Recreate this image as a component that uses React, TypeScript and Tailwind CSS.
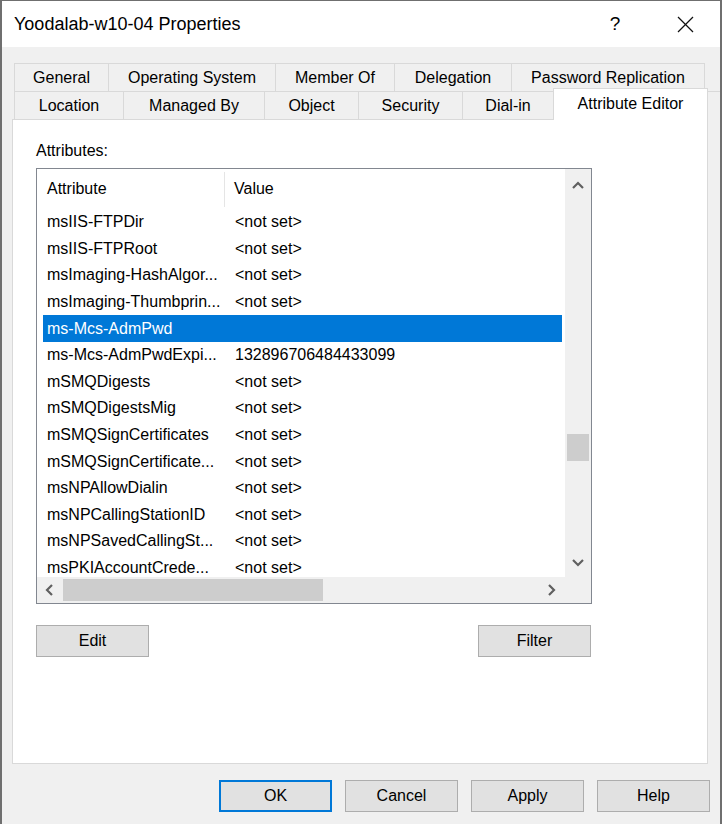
import React from 'react';

const rows: [string, string][] = [
    ['msIIS-FTPDir', '<not set>'],
    ['msIIS-FTPRoot', '<not set>'],
    ['msImaging-HashAlgor...', '<not set>'],
    ['msImaging-Thumbprin...', '<not set>'],
    ['ms-Mcs-AdmPwd', ''],
    ['ms-Mcs-AdmPwdExpi...', '132896706484433099'],
    ['mSMQDigests', '<not set>'],
    ['mSMQDigestsMig', '<not set>'],
    ['mSMQSignCertificates', '<not set>'],
    ['mSMQSignCertificate...', '<not set>'],
    ['msNPAllowDialin', '<not set>'],
    ['msNPCallingStationID', '<not set>'],
    ['msNPSavedCallingSt...', '<not set>'],
    ['msPKIAccountCrede...', '<not set>'],
];

const SELECTED = 4;

const backTabs = [
    { label: 'General', w: 'w-[94px]' },
    { label: 'Operating System', w: 'w-[167px]' },
    { label: 'Member Of', w: 'w-[119px]' },
    { label: 'Delegation', w: 'w-[117px]' },
    { label: 'Password Replication', w: 'w-[194px] border-r' },
];

const frontTabs = [
    { label: 'Location', w: 'w-[109px]' },
    { label: 'Managed By', w: 'w-[141px]' },
    { label: 'Object', w: 'w-[94px]' },
    { label: 'Security', w: 'w-[104px]' },
    { label: 'Dial-in', w: 'w-[91px]' },
];

// Small scrollbar chevron
const Chevron = ({ dir }: { dir: 'up' | 'down' | 'left' | 'right' }) => {
    const pts = {
        up: '1,7 6,2 11,7',
        down: '1,2 6,7 11,2',
        left: '7,1 2,6 7,11',
        right: '2,1 7,6 2,11',
    }[dir];
    const vertical = dir === 'up' || dir === 'down';
    return (
        <svg
            width={vertical ? 12 : 9}
            height={vertical ? 9 : 12}
            viewBox={vertical ? '0 0 12 9' : '0 0 9 12'}
        >
            <polyline points={pts} fill="none" stroke="#606060" strokeWidth="2.2" />
        </svg>
    );
};

const Button = ({ children, primary }: { children: React.ReactNode; primary?: boolean }) => (
    <div
        className={
            primary
                ? 'flex h-[32px] w-[113px] items-center justify-center border-2 border-[#0078d7] bg-[#e1e1e1] text-[16px] text-black'
                : 'flex h-[32px] w-[113px] items-center justify-center border border-[#adadad] bg-[#e1e1e1] text-[16px] text-black'
        }
    >
        {children}
    </div>
);

export default function App() {
    return (
        <div className="h-[824px] w-[723px] overflow-hidden bg-white font-['Liberation_Sans',Arial,sans-serif]">
            <div className="flex h-[824px] w-[722px] flex-col border-x-2 border-t border-[#6f6f6f] bg-[#f0f0f0]">
                {/* Title bar */}
                <div className="flex h-[46px] shrink-0 items-center bg-white pl-[12px] pr-[12px]">
                    <span className="text-[18px] text-black">Yoodalab-w10-04 Properties</span>
                    <div className="ml-auto flex w-[46px] items-center justify-center text-[19px] text-black">?</div>
                    <div className="ml-[24px] flex w-[46px] items-center justify-center">
                        <svg width="17" height="17" viewBox="0 0 17 17">
                            <line x1="1" y1="1" x2="16" y2="16" stroke="#111" strokeWidth="1.3" />
                            <line x1="16" y1="1" x2="1" y2="16" stroke="#111" strokeWidth="1.3" />
                        </svg>
                    </div>
                </div>

                {/* Tabs */}
                <div className="mt-[16px] flex flex-col pl-[12px]">
                    <div className="flex h-[28px]">
                        {backTabs.map((t) => (
                            <div
                                key={t.label}
                                className={`${t.w} flex items-center justify-center border-l border-t border-[#d9d9d9] text-[16px] text-black`}
                            >
                                {t.label}
                            </div>
                        ))}
                    </div>
                    <div className="flex h-[28px] items-end border-t border-[#d9d9d9]">
                        {frontTabs.map((t) => (
                            <div
                                key={t.label}
                                className={`${t.w} flex h-[27px] items-center justify-center border-l border-[#d9d9d9] bg-[#f0f0f0] text-[16px] text-black`}
                            >
                                {t.label}
                            </div>
                        ))}
                        <div className="relative z-10 -mb-px flex h-[32px] w-[155px] items-start justify-center border border-b-0 border-[#d9d9d9] bg-white pt-[3px] text-[16px] text-black">
                            Attribute Editor
                        </div>
                    </div>
                </div>

                {/* Tab panel */}
                <div className="ml-[10px] flex h-[645px] w-[696px] flex-col border border-[#d9d9d9] bg-white pl-[23px] pt-[21px]">
                    <div className="h-[20px] text-[16px] leading-[20px] text-black">Attributes:</div>

                    <div className="mt-[7px] grid h-[436px] w-[556px] grid-cols-[1fr_26px] grid-rows-[1fr_26px] border border-[#828790]">
                        {/* List content */}
                        <div className="overflow-hidden bg-white">
                            <div className="flex h-[40px] items-center text-[16px] text-black">
                                <div className="w-[187px] pl-[10px]">Attribute</div>
                                <div className="h-[35px] w-px bg-[#e5e5e5]" />
                                <div className="pl-[9px]">Value</div>
                            </div>
                            {rows.map(([name, value], i) => (
                                <div
                                    key={name}
                                    className={
                                        i === SELECTED
                                            ? 'ml-[6px] mr-[3px] flex h-[26.6px] items-center whitespace-nowrap bg-[#0078d7] text-[16px] text-white'
                                            : 'ml-[6px] mr-[3px] flex h-[26.6px] items-center whitespace-nowrap text-[16px] text-black'
                                    }
                                >
                                    <div className="w-[181px] overflow-hidden pl-[4px]">{name}</div>
                                    <div className="pl-[11px]">{value}</div>
                                </div>
                            ))}
                        </div>

                        {/* Vertical scrollbar */}
                        <div className="flex flex-col bg-[#f0f0f0]">
                            <div className="flex h-[32px] items-center justify-center">
                                <Chevron dir="up" />
                            </div>
                            <div className="flex flex-1 flex-col items-center">
                                <div className="mt-[233px] h-[27px] w-[22px] bg-[#cdcdcd]" />
                            </div>
                            <div className="flex h-[30px] items-center justify-center">
                                <Chevron dir="down" />
                            </div>
                        </div>

                        {/* Horizontal scrollbar */}
                        <div className="flex bg-[#f0f0f0]">
                            <div className="flex w-[24px] items-center justify-center">
                                <Chevron dir="left" />
                            </div>
                            <div className="flex flex-1 items-center">
                                <div className="ml-[2px] h-[22px] w-[260px] bg-[#cdcdcd]" />
                            </div>
                            <div className="flex w-[28px] items-center justify-center">
                                <Chevron dir="right" />
                            </div>
                        </div>
                        <div className="bg-[#f0f0f0]" />
                    </div>

                    <div className="mt-[21px] flex w-[555px] justify-between">
                        <Button>Edit</Button>
                        <Button>Filter</Button>
                    </div>
                </div>

                {/* Dialog buttons */}
                <div className="mt-[16px] flex justify-end gap-[13px] pr-[10px]">
                    <Button primary>OK</Button>
                    <Button>Cancel</Button>
                    <Button>Apply</Button>
                    <Button>Help</Button>
                </div>
            </div>
        </div>
    );
}
